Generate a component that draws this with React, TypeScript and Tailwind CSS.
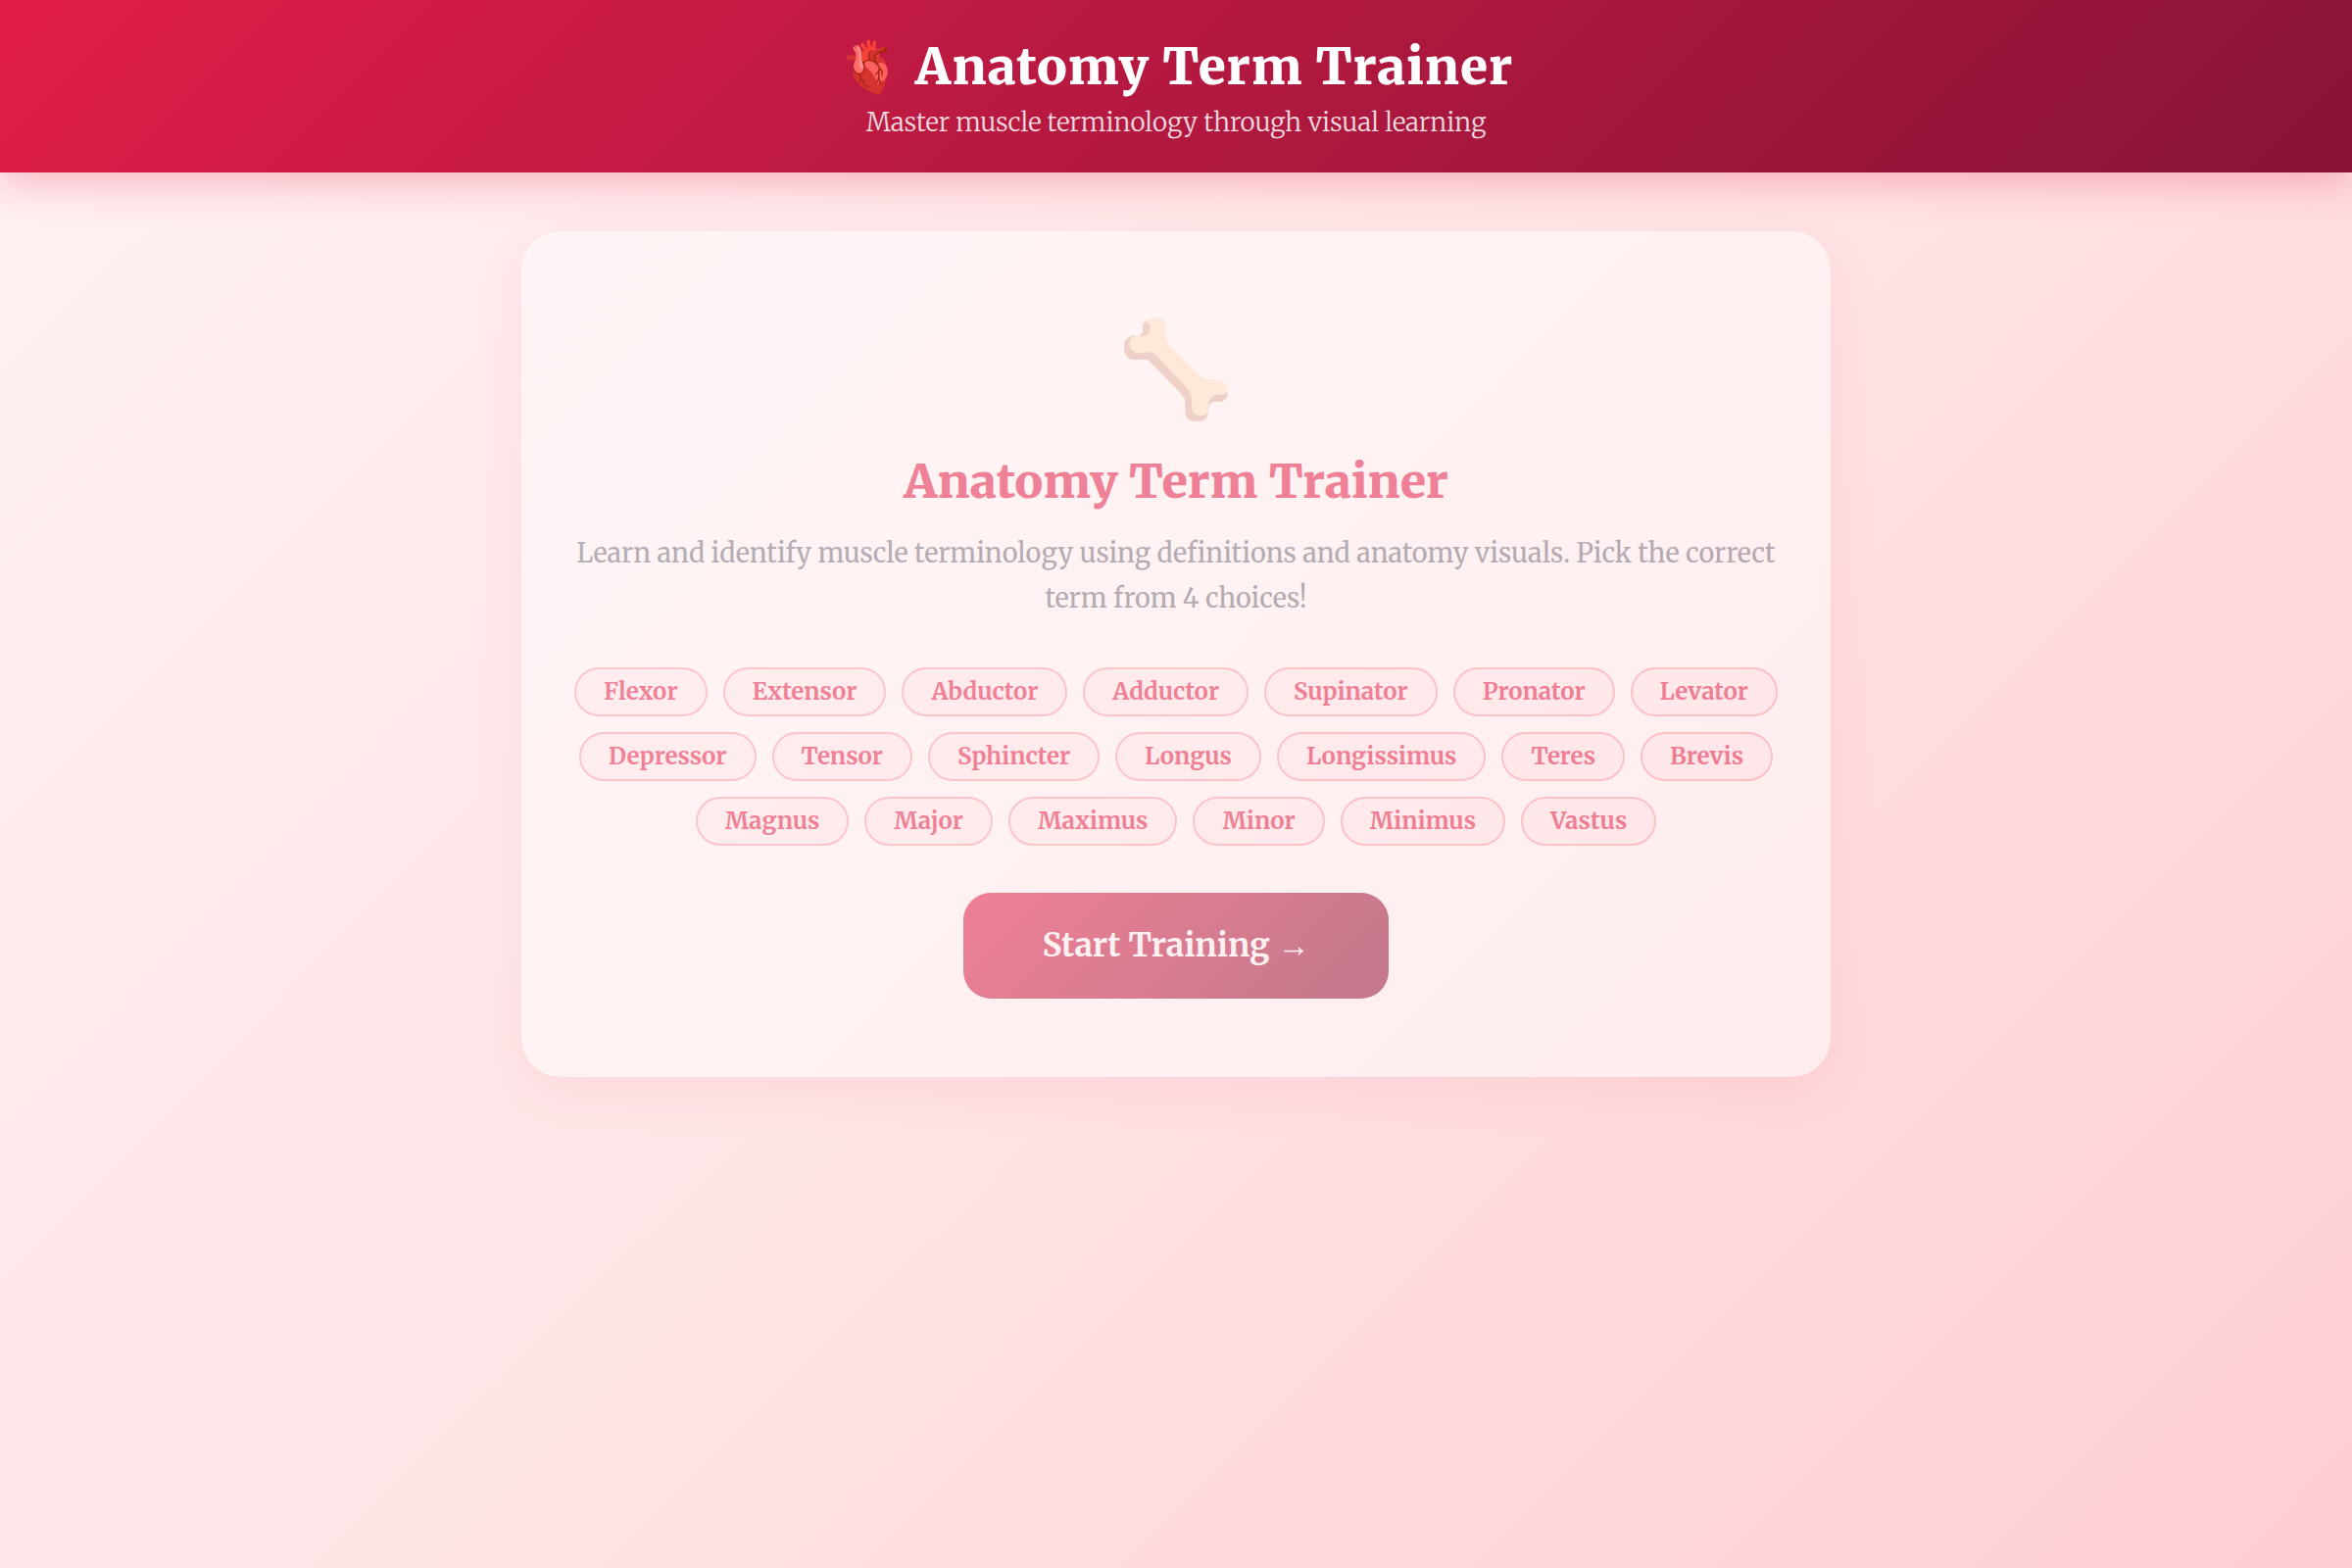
const terms = [
  "Flexor",
  "Extensor",
  "Abductor",
  "Adductor",
  "Supinator",
  "Pronator",
  "Levator",
  "Depressor",
  "Tensor",
  "Sphincter",
  "Longus",
  "Longissimus",
  "Teres",
  "Brevis",
  "Magnus",
  "Major",
  "Maximus",
  "Minor",
  "Minimus",
  "Vastus",
];

export default function App() {
  return (
    <div className="min-h-screen bg-linear-135 from-[#fff1f2] via-[#ffe4e6] to-[#fecdd3] font-['Merriweather',serif]">

      {/* HEADER */}

      <header className="bg-linear-135 from-[#e11d48] to-[#881337] px-8 pt-8 pb-[30px] text-center text-white shadow-[0_8px_40px_rgba(225,29,72,0.3)]">
        <h1 className="text-[51px] leading-[72px] font-black tracking-[1px]">
          🫀 Anatomy Term Trainer
        </h1>
        <p className="text-[26px] leading-[42px] font-light text-white/85">
          Master muscle terminology through visual learning
        </p>
      </header>

      {/* START CARD */}

      <main className="px-8 py-15">
        <section className="mx-auto max-w-[1336px] rounded-[40px] bg-white px-[52px] py-20 text-center opacity-50 shadow-[0_16px_48px_rgba(225,29,72,0.12)]">
          <div aria-hidden="true" className="text-[96px] leading-[120px]">
            🦴
          </div>

          <h2 className="mt-6 text-[48px] leading-[62px] font-black text-[#e11d48]">
            Anatomy Term Trainer
          </h2>

          <p className="mt-[19px] text-[27px] leading-[46px] text-[#6b7280]">
            Learn and identify muscle terminology using definitions and anatomy visuals. Pick the correct term from 4 choices!
          </p>

          <ul className="mt-12 flex flex-wrap justify-center gap-4">
            {terms.map((term) => (
              <li
                key={term}
                className="rounded-full border-2 border-[#fda4af] bg-[#fff1f2] px-7 text-[24px] leading-[46px] font-bold text-[#e11d48]"
              >
                {term}
              </li>
            ))}
          </ul>

          <button
            type="button"
            className="mt-12 h-[108px] rounded-[28px] bg-linear-135 from-[#e11d48] to-[#881337] px-20 text-[33px] font-bold text-white"
          >
            Start Training <span className="font-['Liberation_Serif',serif] font-normal">→</span>
          </button>
        </section>
      </main>

    </div>
  );
}
